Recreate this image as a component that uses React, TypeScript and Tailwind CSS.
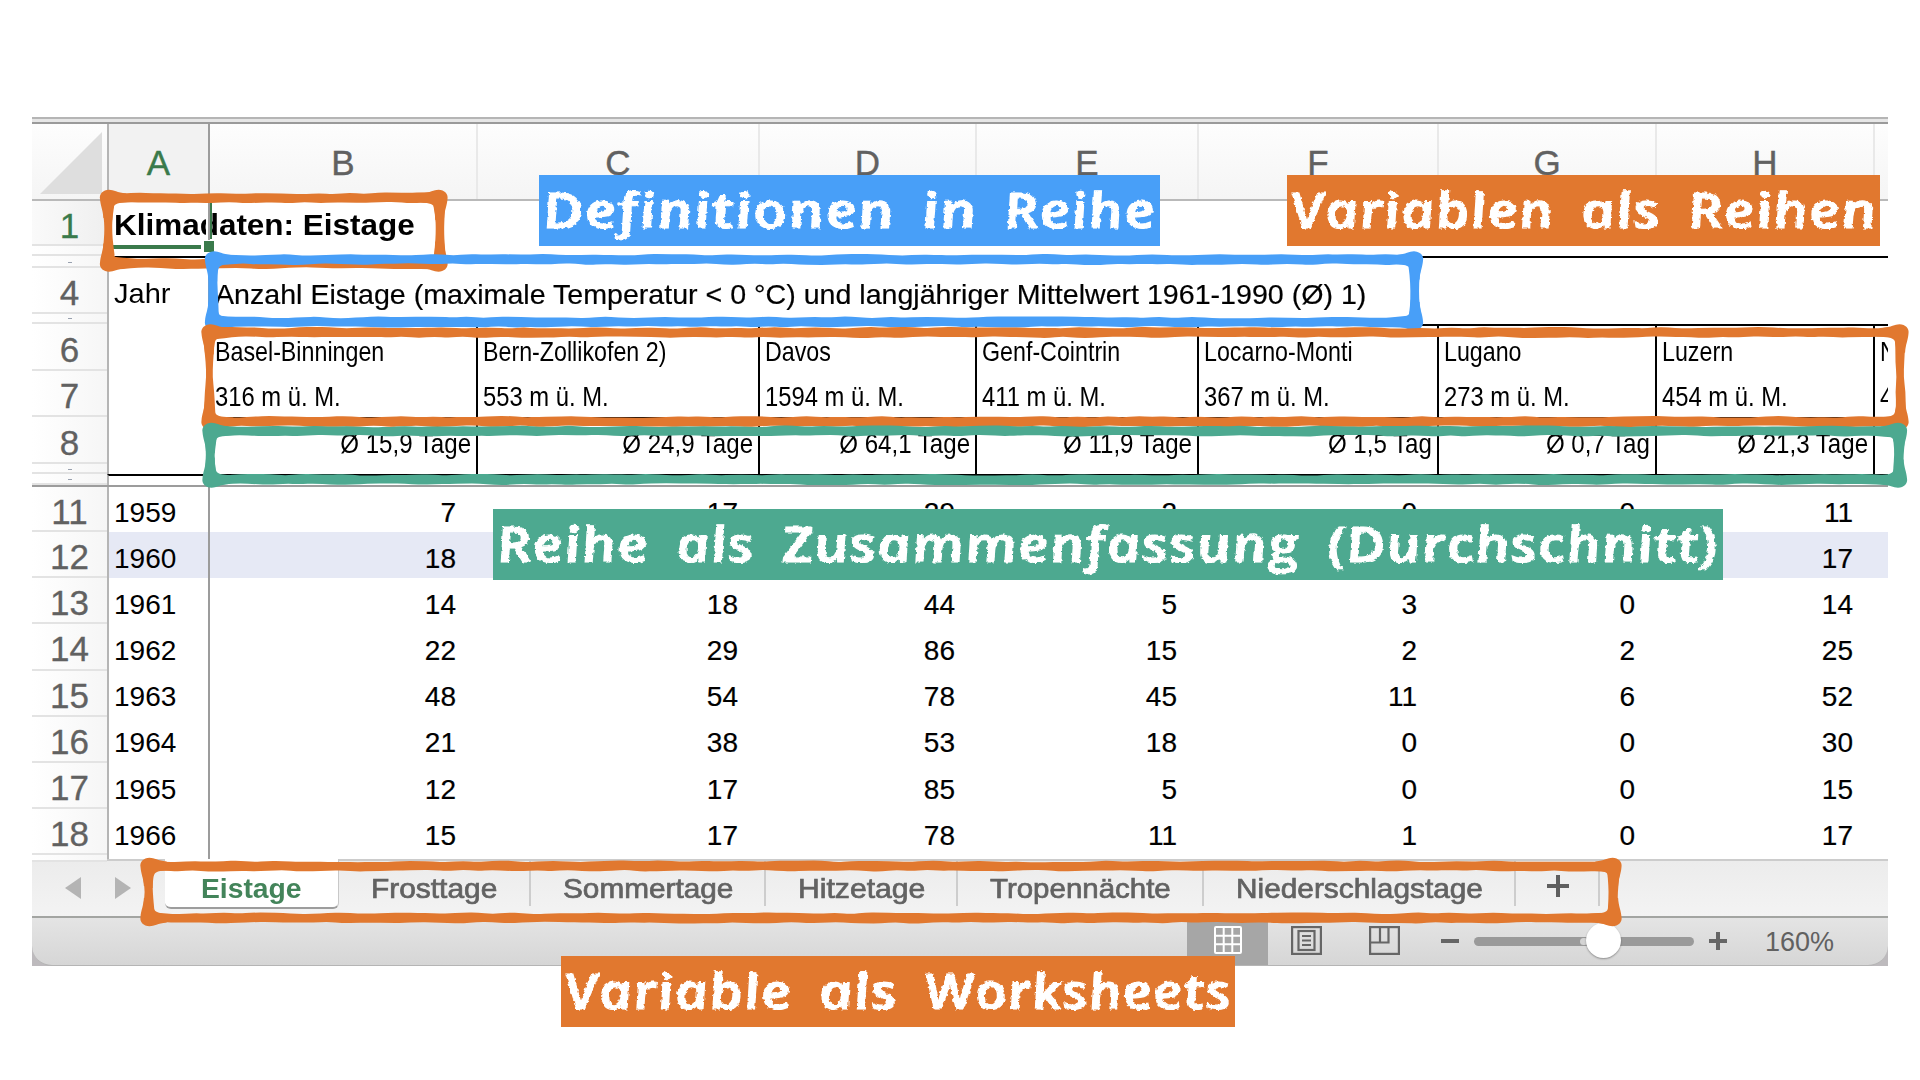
import { useLayoutEffect, useRef, useState, type ReactNode } from "react";

/* Stretches a piece of text horizontally so that it fills a given width. */
function Fit({ width, className = "", children }: { width: number; className?: string; children: ReactNode }) {
  const ref = useRef<HTMLSpanElement>(null);
  const [scale, setScale] = useState(1);
  useLayoutEffect(() => {
    if (ref.current) setScale(width / ref.current.offsetWidth);
  }, [width]);
  return (
    <span className="inline-block shrink-0 whitespace-nowrap text-left" style={{ width }}>
      <span ref={ref} className={`inline-block origin-left whitespace-nowrap ${className}`} style={{ transform: `scaleX(${scale})` }}>
        {children}
      </span>
    </span>
  );
}

const colWidths = ["w-[268px]", "w-[282px]", "w-[217px]", "w-[222px]", "w-[240px]", "w-[218px]", "w-[218px]", "w-[15px]"];
const letters = ["B", "C", "D", "E", "F", "G", "H", ""];
const stations = ["Basel-Binningen", "Bern-Zollikofen 2)", "Davos", "Genf-Cointrin", "Locarno-Monti", "Lugano", "Luzern", "N"];
const heights = ["316 m ü. M.", "553 m ü. M.", "1594 m ü. M.", "411 m ü. M.", "367 m ü. M.", "273 m ü. M.", "454 m ü. M.", "4"];
const means = ["Ø 15,9 Tage", "Ø 24,9 Tage", "Ø 64,1 Tage", "Ø 11,9 Tage", "Ø 1,5 Tag", "Ø 0,7 Tag", "Ø 21,3 Tage", ""];
const data: [number, number, number[]][] = [
  [11, 1959, [7, 17, 29, 2, 0, 0, 11]],
  [12, 1960, [18, 20, 45, 8, 1, 0, 17]],
  [13, 1961, [14, 18, 44, 5, 3, 0, 14]],
  [14, 1962, [22, 29, 86, 15, 2, 2, 25]],
  [15, 1963, [48, 54, 78, 45, 11, 6, 52]],
  [16, 1964, [21, 38, 53, 18, 0, 0, 30]],
  [17, 1965, [12, 17, 85, 5, 0, 0, 15]],
  [18, 1966, [15, 17, 78, 11, 1, 0, 17]],
];

function RowHead({ n, active, dot }: { n?: number; active?: boolean; dot?: boolean }) {
  return (
    <div
      className={`relative flex w-[75px] shrink-0 items-center justify-center border-b-2 pt-[5px] text-[35px] leading-none ${
        active ? "bg-linear-to-r from-[#fafafa] to-[#efefef] text-[#3a7a4b]" : "bg-linear-to-r from-white to-[#f6f6f6] text-[#616161]"
      } border-[#e3e3e3]`}
    >
      {n !== undefined && <span className="[-webkit-text-stroke:0.3px_currentColor]">{n}</span>}
      {dot && <span className="-mt-[3px] h-px w-1 bg-gray-400" />}
    </div>
  );
}

function Row({ h, n, active, dot, a, line, bg = "", children }: { h: string; n?: number; active?: boolean; dot?: boolean; a?: ReactNode; line?: boolean; bg?: string; children?: ReactNode }) {
  return (
    <div className={`flex shrink-0 ${h}`}>
      <RowHead n={n} active={active} dot={dot} />
      <div className={`flex w-[101px] shrink-0 items-center whitespace-nowrap border-l-2 border-l-[#b5b5b5] pl-[5px] ${active ? "pt-[2px]" : "pt-[7px]"} ${line ? "border-t-2 border-t-black" : ""} ${bg}`}>{a}</div>
      {children ?? <div className={`flex-1 border-l-2 border-l-[#9c9c9c] ${line ? "border-t-2 border-t-black" : ""}`} />}
    </div>
  );
}

function StationCells({ items, right, top }: { items: string[]; right?: boolean; top?: boolean }) {
  return (
    <>
      {items.map((s, i) => (
        <div
          key={i}
          className={`flex shrink-0 items-center overflow-hidden whitespace-nowrap border-l-2 pl-[5px] ${i === 0 ? "border-l-[#9c9c9c]" : "border-l-black"} ${
            top ? "border-t-2 border-t-black" : ""
          } ${right ? "justify-end pr-[5px]" : ""} ${colWidths[i]}`}
        >
          <span className={right ? "origin-right scale-x-[0.86] pt-[4px]" : top ? "origin-left scale-x-[0.83] pt-[6px]" : "origin-left scale-x-[0.85] pt-[6px]"}>{s}</span>
        </div>
      ))}
    </>
  );
}

/* Brush-like frame: four uneven bars with thick corners. */
function noise(seed: number) {
  let s = seed;
  return () => {
    s = (s * 16807) % 2147483647;
    return s / 2147483647 - 0.5;
  };
}

function bar(len: number, rnd: () => number, half: number, waist = 0) {
  const top: [number, number][] = [];
  const bottom: [number, number][] = [];
  const steps = Math.max(4, Math.round(len / 15));
  for (let i = 0; i <= steps; i++) {
    const t = (i / steps) * len;
    const edge = Math.min(t, len - t);
    const thick = half + (edge < 22 ? ((22 - edge) / 22) ** 2 * 1.6 : 0) - (waist * edge * 2) / len;
    top.push([t, -(thick + rnd() * 1.9)]);
    bottom.push([t, thick + rnd() * 1.9]);
  }
  const smooth = (p: [number, number][]) =>
    p
      .slice(1)
      .map((q, i) => `Q${p[i][0].toFixed(1)} ${p[i][1].toFixed(1)} ${((p[i][0] + q[0]) / 2).toFixed(1)} ${((p[i][1] + q[1]) / 2).toFixed(1)}`)
      .join("");
  return `M0 ${top[0][1]}${smooth(top)}L${len} 0${smooth(bottom.reverse())}L0 0Z`;
}

function Frame({ x, y, r, b, color, seed }: { x: number; y: number; r: number; b: number; color: string; seed: number }) {
  const rnd = noise(seed);
  const x0 = x + 8, y0 = y + 8, w = r - x - 16, h = b - y - 15.5;
  const corners = [[x0, y0, 1, 1], [x0 + w, y0, -1, 1], [x0, y0 + h, 1, -1], [x0 + w, y0 + h, -1, -1]];
  return (
    <g fill={color}>
      <path transform={`translate(${x0} ${y0})`} d={bar(w, rnd, 4.7)} />
      <path transform={`translate(${x0} ${y0 + h})`} d={bar(w, rnd, 4.7)} />
      <path transform={`translate(${x0} ${y0}) rotate(90)`} d={bar(h, rnd, 5.2, 1.3)} />
      <path transform={`translate(${x0 + w} ${y0}) rotate(90)`} d={bar(h, rnd, 5.2, 1.3)} />
      {corners.map(([cx, cy, sx, sy], i) => (
        <path
          key={i}
          transform={`translate(${cx} ${cy}) scale(${sx} ${sy})`}
          d="M-8 1C-9-4-5-8 1-8.2C6-8 9-5.5 18-4.5L24 4C13 4.6 8 5 6 8C4.6 11 4.6 14 4.2 22L-4.6 20C-5 12-7.5 8-8 1Z"
        />
      ))}
    </g>
  );
}

function Label({ className, words }: { className: string; words: [string, number][] }) {
  return (
    <div className={`absolute flex h-[71px] items-center text-white ${className}`}>
      <div className="flex gap-[27px] pb-[2px] pl-[3px] font-['Open_Sans'] text-[49px] font-semibold italic leading-[71px] [-webkit-text-stroke:1.2px_white] [filter:url(#chalk)]">
        {words.map(([w, width]) => (
          <Fit key={w} width={width}>
            <span className="inline-block skew-x-[9deg] tracking-[1px]">{w}</span>
          </Fit>
        ))}
      </div>
    </div>
  );
}

function Tab({ w, width, children }: { w: string; width: number; children: string }) {
  return (
    <div className={`flex h-[45px] shrink-0 items-center justify-center border-r-2 border-[#cdcdcd] pt-[11px] text-[#626262] ${w}`}>
      <Fit width={width} className="[-webkit-text-stroke:0.7px_#626262]">{children}</Fit>
    </div>
  );
}

export default function App() {
  return (
    <div className="relative h-[1080px] w-[1920px] overflow-hidden bg-white pl-[32px] pt-[117px] font-['Liberation_Sans',Arial,sans-serif] text-[28px] leading-none text-black">
      <div className="flex h-[849px] w-[1856px] flex-col overflow-hidden">
        <div className="h-[7px] shrink-0 border-b-2 border-t-2 border-b-[#9a9a9a] border-t-[#b5b5b5] bg-[#e6e6e6]" />

        {/* Column letters */}
        <div className="flex h-[77px] shrink-0 border-b-2 border-[#b9b9b9] bg-linear-to-b from-[#fdfdfd] to-[#f5f5f5] text-[35px] text-[#616161]">
          <div className="flex w-[75px] shrink-0 items-end justify-end pb-[5px] pr-[5px]">
            <svg width="62" height="62" viewBox="0 0 62 62"><path d="M62 0V62H0Z" fill="#dedede" /></svg>
          </div>
          <div className="flex w-[101px] shrink-0 items-center justify-center border-l-2 border-[#b5b5b5] bg-[#f2f2f2] pt-[2px] text-[#3a7a4b] [-webkit-text-stroke:0.4px_currentColor]">A</div>
          {letters.map((l, i) => (
            <div key={i} className={`flex shrink-0 items-center justify-center border-l-2 pt-[2px] [-webkit-text-stroke:0.4px_currentColor] ${i === 0 ? "border-[#9c9c9c]" : "border-[#e9e9e9]"} ${colWidths[i]}`}>
              {l}
            </div>
          ))}
        </div>

        {/* Frozen rows */}
        <Row h="h-[45px]" n={1} active a={<Fit width={301} className="text-[30px] font-bold">Klimadaten: Eistage</Fit>} />
        <Row h="h-[10px]" />
        <Row h="h-[12px]" dot line />
        <Row h="h-[45.5px]" n={4} a={<Fit width={56}>Jahr</Fit>}>
          <div className="flex flex-1 items-center border-l-2 border-l-[#9c9c9c] pl-[5px] pt-[8px]">
            <Fit width={1151} className="[-webkit-text-stroke:0.2px_black]">Anzahl Eistage (maximale Temperatur &lt; 0 °C) und langjähriger Mittelwert 1961-1990 (Ø) 1)</Fit>
          </div>
        </Row>
        <Row h="h-[10.5px]" dot />
        <Row h="h-[47px]" n={6}><StationCells items={stations} top /></Row>
        <Row h="h-[46px]" n={7}><StationCells items={heights} /></Row>
        <Row h="h-[47px]" n={8}><StationCells items={means} right top /></Row>
        <Row h="h-[10px]" dot><StationCells items={["", "", "", "", "", "", "", ""]} /></Row>
        <Row h="h-[11px]" dot line />
        <div className="h-[2px] shrink-0 bg-[#9c9c9c]" />

        {/* Scrolling rows */}
        {data.map(([n, year, values]) => (
          <Row key={n} h={n === 11 ? "h-[45px]" : "h-[46.2px]"} n={n} a={year} bg={n === 12 ? "bg-[#e6e9f5]" : ""}>
            <div className={`flex flex-1 border-l-2 border-l-[#9c9c9c] [-webkit-text-stroke:0.2px_black] ${n === 12 ? "bg-[#e6e9f5]" : ""}`}>
              {values.map((v, i) => (
                <div key={i} className={`flex shrink-0 items-center justify-end pr-[20px] pt-[7px] ${i === 0 ? "w-[266px]" : colWidths[i]}`}>{v}</div>
              ))}
            </div>
          </Row>
        ))}
        <Row h="h-[3.6px]" />

        {/* Sheet tabs */}
        <div className="flex h-[59px] shrink-0 border-b-2 border-t-2 border-b-[#a3a5a2] border-t-[#cccccc] bg-linear-to-b from-[#ececec] to-[#f3f3f3]">
          <div className="flex w-[133px] shrink-0 items-center gap-[34px] pl-[33px]">
            <svg width="16" height="22" viewBox="0 0 16 22"><path d="M16 0V22L0 11Z" fill="#b4b4b4" /></svg>
            <svg width="16" height="22" viewBox="0 0 16 22"><path d="M0 0V22L16 11Z" fill="#b4b4b4" /></svg>
          </div>
          <div className="-mt-[2px] flex h-[50px] w-[174px] shrink-0 items-center justify-center rounded-b-[6px] border-b-2 border-r border-b-[#9d9d9d] border-r-[#c8c8c8] bg-white pt-[12px] font-bold text-[#43845a]">
            <Fit width={101}>Eistage</Fit>
          </div>
          <Tab w="w-[192px]" width={126}>Frosttage</Tab>
          <Tab w="w-[235px]" width={170}>Sommertage</Tab>
          <Tab w="w-[192px]" width={127}>Hitzetage</Tab>
          <Tab w="w-[246px]" width={181}>Tropennächte</Tab>
          <Tab w="w-[312px]" width={247}>Niederschlagstage</Tab>
          <div className="flex h-[45px] w-[84px] shrink-0 items-center justify-center border-r-2 border-[#cdcdcd] pl-[2px] pt-[6px]">
            <svg width="22" height="22" viewBox="0 0 22 22"><path d="M11 0V22M0 11H22" stroke="#5f5f5f" strokeWidth="4" /></svg>
          </div>
        </div>

        {/* Status bar */}
        <div className="h-[48px] shrink-0 bg-[#bdbabd]">
          <div className="flex h-[48px] items-center rounded-b-[20px] border-b border-[#b5b5b5] bg-linear-to-b from-[#e4e4e4] to-[#d6d6d6] pl-[1155px]">
            <div className="flex h-[48px] w-[81px] shrink-0 items-center justify-center bg-[#a6a6a6] pb-[2px]">
              <svg width="28" height="28" viewBox="0 0 28 28" fill="none" stroke="white" strokeWidth="2">
                <rect x="1" y="1" width="26" height="26" rx="1" />
                <path d="M9.7 1V27M18.3 1V27M1 9.7H27M1 18.3H27" />
              </svg>
            </div>
            <svg className="mb-[2px] ml-[23px] shrink-0" width="31" height="29" viewBox="0 0 31 29" fill="none" stroke="#666" strokeWidth="2.2">
              <rect x="1.1" y="1.1" width="28.8" height="26.8" />
              <rect x="7.5" y="5" width="16" height="19" />
              <path d="M11 10H20M11 14.5H20M11 19H20" strokeWidth="2" />
            </svg>
            <svg className="mb-[2px] ml-[47px] shrink-0" width="31" height="29" viewBox="0 0 31 29" fill="none" stroke="#666" strokeWidth="2.2">
              <rect x="1.1" y="1.1" width="28.8" height="26.8" />
              <path d="M1 16.5H19.5V1M11 1V16.5" />
            </svg>
            <span className="ml-[41px] h-[4px] w-[18px] shrink-0 bg-[#666]" />
            <div className="relative ml-[15px] mt-[1px] h-[9px] w-[220px] shrink-0 rounded-full bg-[#9a9a9a]">
              <span className="absolute left-[106px] top-[1px] h-[7px] w-[8px] rounded-full bg-[#d4d4d4]" />
              <span className="absolute -top-[14px] left-[112px] size-[35px] rounded-full bg-white shadow-[0_1px_2px_rgba(0,0,0,0.35)]" />
            </div>
            <svg className="ml-[15px] shrink-0" width="18" height="18" viewBox="0 0 18 18"><path d="M9 0V18M0 9H18" stroke="#666" strokeWidth="4" /></svg>
            <span className="ml-[38px] pt-[2px] text-[27px] text-[#616161]">160%</span>
          </div>
        </div>
      </div>

      {/* Cell cursor of A1 */}
      <div className="absolute left-[206px] top-[203px] flex h-[36px] w-[6px] bg-white pl-[2px]">
        <span className="w-[2px] bg-[#9c9c9c]" />
        <span className="w-[2px] bg-[#3a7a4b]" />
      </div>
      <div className="absolute left-[111px] top-[245px] h-[4px] w-[90px] bg-[#3a7a4b]" />
      <div className="absolute left-[203px] top-[240px] h-[13px] w-[12px] border border-white bg-[#3a7a4b]" />

      <svg className="absolute left-0 top-0" width="1920" height="1080" viewBox="0 0 1920 1080">
        <defs>
          <filter id="chalk" x="-2%" y="-10%" width="104%" height="120%">
            <feTurbulence type="fractalNoise" baseFrequency="0.25" numOctaves="2" seed="4" />
            <feDisplacementMap in="SourceGraphic" scale="4" xChannelSelector="R" yChannelSelector="G" />
          </filter>
        </defs>
        <Frame x={100} y={190} r={447.5} b={271} color="#e1782f" seed={11} />
        <Frame x={205} y={251.5} r={1423} b={329.5} color="#489ff8" seed={23} />
        <Frame x={201.5} y={324.5} r={1908.5} b={429} color="#e1782f" seed={37} />
        <Frame x={202.5} y={423} r={1907} b={487} color="#4da990" seed={51} />
        <Frame x={140.5} y={858} r={1621.5} b={925.5} color="#e1782f" seed={77} />
      </svg>

      <Label className="left-[539px] top-[175px] w-[621px] bg-[#489ff8]" words={[["Definitionen", 352], ["in", 55], ["Reihe", 152]]} />
      <Label className="left-[1287px] top-[175px] w-[593px] bg-[#e1782f]" words={[["Variablen", 263], ["als", 80], ["Reihen", 189]]} />
      <Label className="left-[493px] top-[509px] w-[1230px] bg-[#4da990]" words={[["Reihe", 152], ["als", 79], ["Zusammenfassung", 518], ["(Durchschnitt)", 392]]} />
      <Label className="left-[561px] top-[956px] w-[674px] bg-[#e1782f]" words={[["Variable", 227], ["als", 79], ["Worksheets", 307]]} />
    </div>
  );
}
